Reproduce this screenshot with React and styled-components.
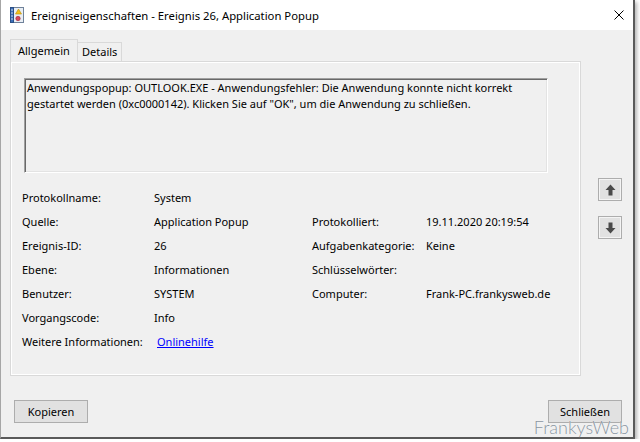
import React from 'react';
import styled, { createGlobalStyle } from 'styled-components';

const GlobalStyle = createGlobalStyle`
  html, body {
    margin: 0;
    padding: 0;
    background: #ffffff;
  }
  body {
    font-family: "Noto Sans", "Segoe UI", sans-serif;
    font-size: 11px;
    color: #000000;
  }
  * {
    box-sizing: border-box;
  }
`;

const Window = styled.div`
  position: relative;
  width: 635px;
  height: 439px;
  display: flex;
  flex-direction: column;
  background: #f0f0f0;
  border-left: 1px solid #a6a6a6;
  border-right: 2px solid #5a5a5a;
  border-bottom: 2px solid #5a5a5a;
  box-shadow: 2px 2px 4px rgba(0, 0, 0, 0.3);
`;

const TitleBar = styled.div`
  height: 30px;
  flex: none;
  display: flex;
  align-items: center;
  background: #ffffff;
  padding: 0 9px 0 9px;
`;

const TitleText = styled.span`
  margin-left: 7px;
  flex: 1;
  font-size: 11.3px;
  color: #000000;
`;

const Body = styled.div`
  flex: 1;
  display: flex;
  flex-direction: column;
  padding: 9px 11px 0 9px;
`;

const MainRow = styled.div`
  display: flex;
`;

const TabArea = styled.div`
  width: 571px;
  display: flex;
  flex-direction: column;
`;

const TabStrip = styled.div`
  height: 23px;
  display: flex;
  align-items: flex-end;
  margin-bottom: -1px;
  position: relative;
  z-index: 1;
`;

const Tab = styled.div`
  height: ${(p) => (p.$active ? '23px' : '20px')};
  width: ${(p) => p.$width}px;
  padding-left: ${(p) => (p.$active ? '7px' : '4px')};
  padding-top: ${(p) => (p.$active ? '3px' : '1px')};
  border: 1px solid #d9d9d9;
  border-bottom: ${(p) => (p.$active ? 'none' : '1px solid #d9d9d9')};
  border-left: ${(p) => (p.$active ? '1px solid #d9d9d9' : 'none')};
  background: #f0f0f0;
  line-height: 16px;
`;

const Panel = styled.div`
  height: 315px;
  border: 1px solid #d9d9d9;
  box-shadow: inset 0 0 0 1px #ffffff;
  display: flex;
  flex-direction: column;
`;

const MessageBox = styled.div`
  margin: 16px 32px 0 13px;
  height: 95px;
  border: 1px solid;
  border-color: #a0a0a0 #ffffff #ffffff #a0a0a0;
  box-shadow: inset 1px 1px 0 #696969, inset -1px -1px 0 #e3e3e3;
  padding: 1px 2px;
  line-height: 16px;
`;

const Props = styled.div`
  margin-top: 12px;
  padding-left: 11px;
  display: grid;
  grid-template-columns: 132px 158px 114px 1fr;
  grid-auto-rows: 24px;
  align-items: center;
`;

const Cell = styled.div`
  white-space: nowrap;
`;

const HelpLink = styled.a`
  margin-left: 3px;
  color: #0000ff;
  text-decoration: underline;
  cursor: pointer;
`;

const SideColumn = styled.div`
  display: flex;
  flex-direction: column;
  gap: 15px;
  padding-top: 139px;
  margin-left: 17px;
`;

const ArrowButton = styled.div`
  width: 24px;
  height: 23px;
  background: #e1e1e1;
  border: 1px solid #adadad;
  box-shadow: inset 0 0 0 1px #f4f4f4;
  display: flex;
  align-items: center;
  justify-content: center;
`;

const Footer = styled.div`
  display: flex;
  justify-content: space-between;
  padding: 24px 0 0 4px;
`;

const Button = styled.div`
  width: 74px;
  height: 23px;
  background: #e1e1e1;
  border: 1px solid #adadad;
  display: flex;
  align-items: center;
  justify-content: center;
  line-height: 16px;
`;

const Watermark = styled.div`
  position: absolute;
  right: 4px;
  bottom: 1px;
  font-family: "Lato", "Liberation Sans", sans-serif;
  font-weight: 300;
  font-size: 18px;
  line-height: 18px;
  color: #8995a1;
  text-shadow: 0 0 1px #ffffff;
`;

const EventIcon = () => (
  <svg width="14" height="16" viewBox="0 0 14 16">
    <rect x="2.5" y="0.5" width="11" height="15" fill="#e9eef4" stroke="#6f829a" />
    <rect x="0.5" y="0.5" width="3" height="15" fill="#3d6fb8" stroke="#2b4f86" />
    <path d="M1 3h2M1 6h2M1 9h2M1 12h2" stroke="#c9d8ee" />
    <path d="M8.5 2 L11.5 7 L5.5 7 Z" fill="#f5c21b" stroke="#b88a00" strokeWidth="0.6" />
    <circle cx="8" cy="11.5" r="2.2" fill="#d9485a" stroke="#9c2233" strokeWidth="0.6" />
  </svg>
);

const CloseIcon = () => (
  <svg width="10" height="10" viewBox="0 0 10 10">
    <path d="M0.5 0.5 L9.5 9.5 M9.5 0.5 L0.5 9.5" stroke="#000" strokeWidth="1" />
  </svg>
);

const BlockArrow = ({ down }) => (
  <svg width="11" height="12" viewBox="0 0 11 12" style={down ? { transform: 'rotate(180deg)' } : undefined}>
    <path d="M5.5 0.5 L10.5 6 L7.5 6 L7.5 11.5 L3.5 11.5 L3.5 6 L0.5 6 Z" fill="#4a4a4a" />
  </svg>
);

const rows = [
  ['Protokollname:', 'System', '', ''],
  ['Quelle:', 'Application Popup', 'Protokolliert:', '19.11.2020 20:19:54'],
  ['Ereignis-ID:', '26', 'Aufgabenkategorie:', 'Keine'],
  ['Ebene:', 'Informationen', 'Schlüsselwörter:', ''],
  ['Benutzer:', 'SYSTEM', 'Computer:', 'Frank-PC.frankysweb.de'],
  ['Vorgangscode:', 'Info', '', ''],
];

export default function App() {
  return (
    <>
      <GlobalStyle />
      <Window>
        <TitleBar>
          <EventIcon />
          <TitleText>Ereigniseigenschaften - Ereignis 26, Application Popup</TitleText>
          <CloseIcon />
        </TitleBar>
        <Body>
          <MainRow>
            <TabArea>
              <TabStrip>
                <Tab $active $width={68}>Allgemein</Tab>
                <Tab $width={44}>Details</Tab>
              </TabStrip>
              <Panel>
                <MessageBox>
                  Anwendungspopup: OUTLOOK.EXE - Anwendungsfehler: Die Anwendung konnte nicht korrekt
                  gestartet werden (0xc0000142). Klicken Sie auf "OK", um die Anwendung zu schließen.
                </MessageBox>
                <Props>
                  {rows.map((r) => r.map((c, i) => <Cell key={r[0] + i}>{c}</Cell>))}
                  <Cell>Weitere Informationen:</Cell>
                  <Cell>
                    <HelpLink>Onlinehilfe</HelpLink>
                  </Cell>
                </Props>
              </Panel>
            </TabArea>
            <SideColumn>
              <ArrowButton>
                <BlockArrow />
              </ArrowButton>
              <ArrowButton>
                <BlockArrow down />
              </ArrowButton>
            </SideColumn>
          </MainRow>
          <Footer>
            <Button>Kopieren</Button>
            <Button>Schließen</Button>
          </Footer>
        </Body>
        <Watermark>FrankysWeb</Watermark>
      </Window>
    </>
  );
}
